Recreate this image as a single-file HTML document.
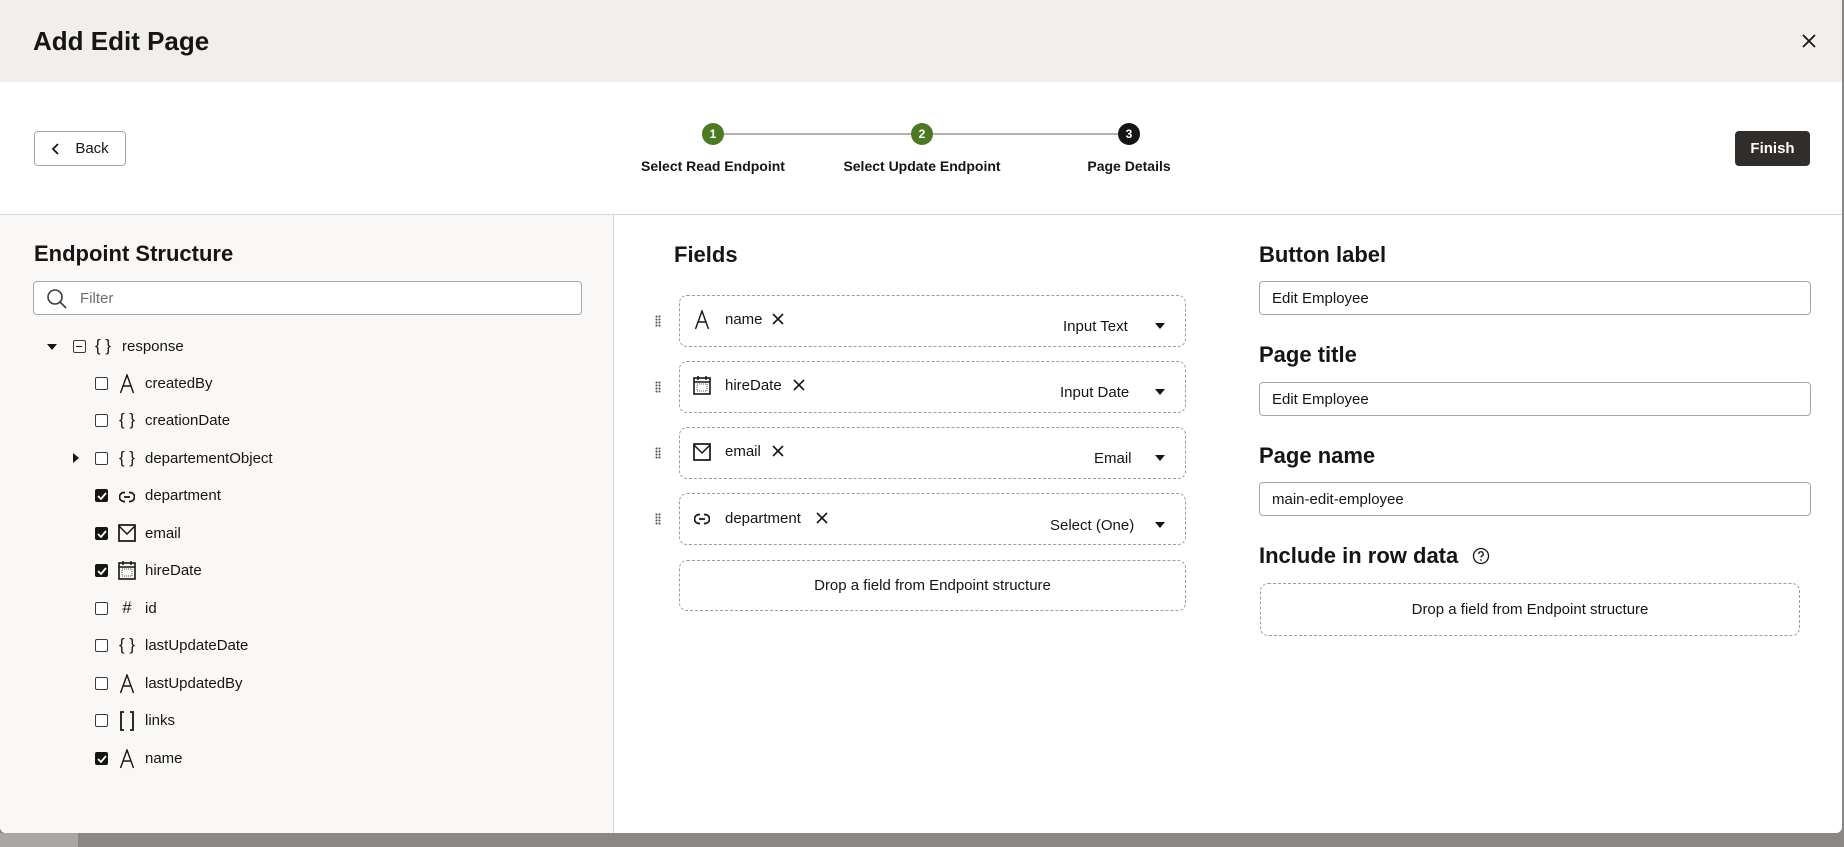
<!DOCTYPE html>
<html><head><meta charset="utf-8"><style>
*{box-sizing:border-box;margin:0;padding:0}
body{width:1844px;height:847px;overflow:hidden;background:#8a8886;font-family:"Liberation Sans",sans-serif;color:#161513;position:relative}
.dlg{position:absolute;left:0;top:0;width:1842px;height:833px;background:#fff;border-radius:0 0 6px 6px;overflow:hidden}
.hdr{position:absolute;left:0;top:0;width:100%;height:82px;background:#f0efed}
.hdr h1{position:absolute;left:33px;top:26px;font-size:26px;font-weight:bold;line-height:30px}
.abs{position:absolute}
.btn{position:absolute;border-radius:4px;font-size:15px;display:flex;align-items:center;justify-content:center}
.left{position:absolute;left:0;top:215px;width:614px;height:618px;background:#f9f8f7;border-right:1px solid #d6d4d2}
.sep{position:absolute;left:0;top:214px;width:100%;height:1px;background:#d6d4d2}
h2{position:absolute;font-size:22px;font-weight:bold;line-height:26px}
.inp{position:absolute;border:1px solid #a9a7a5;border-radius:4px;background:#fff;font-size:15px;display:flex;align-items:center;padding-left:12px}
.cb{position:absolute;width:13px;height:13px;border:1.5px solid #3d3b39;border-radius:2px;background:#fff}
.cb.on{background:#161513;border-color:#161513}
.ic{position:absolute;width:22px;text-align:center;font-size:17px}
.txt{position:absolute;font-size:15px;white-space:nowrap}
.card{position:absolute;left:679px;width:507px;height:52px;border:1px dashed #9e9c9a;border-radius:8px}
.drag{position:absolute;left:655px;width:6px;height:12px;background-image:radial-gradient(circle,#555 0.9px,transparent 1.2px);background-size:3px 3px}
.tri{position:absolute;width:0;height:0;border-left:5px solid transparent;border-right:5px solid transparent;border-top:6px solid #161513}
.step{position:absolute;width:22px;height:22px;border-radius:50%;color:#fff;font-size:12px;font-weight:bold;display:flex;align-items:center;justify-content:center}
.sl{position:absolute;top:158px;font-size:14px;font-weight:bold;white-space:nowrap;transform:translateX(-50%)}
</style></head><body>
<div class="abs" style="left:0;top:833px;width:78px;height:14px;background:#a9a7a5"></div>
<div class="dlg">
 <div class="hdr"><h1>Add Edit Page</h1>
  <svg class="abs" style="left:1802px;top:34px" width="14" height="14" viewBox="0 0 14 14"><path d="M1 1L13 13M13 1L1 13" stroke="#161513" stroke-width="1.8"/></svg>
 </div>
 <div class="btn" style="left:34px;top:131px;width:92px;height:35px;border:1px solid #a9a7a5;background:#fff">
  <svg width="10" height="12" viewBox="0 0 10 12" style="margin-right:14px"><path d="M7 1L2 6L7 11" stroke="#161513" stroke-width="1.8" fill="none"/></svg>Back</div>
 <div class="abs" style="left:724px;top:133px;width:406px;height:2px;background:#b3b1af"></div>
 <div class="step" style="left:702px;top:123px;background:#4b7a22">1</div>
 <div class="step" style="left:911px;top:123px;background:#4b7a22">2</div>
 <div class="step" style="left:1118px;top:123px;background:#161513">3</div>
 <div class="sl" style="left:713px">Select Read Endpoint</div>
 <div class="sl" style="left:922px">Select Update Endpoint</div>
 <div class="sl" style="left:1129px">Page Details</div>
 <div class="btn" style="left:1735px;top:131px;width:75px;height:35px;background:#312d2a;color:#fff;font-weight:bold">Finish</div>
 <div class="sep"></div>
 <div class="left">
  <h2 style="left:34px;top:26px">Endpoint Structure</h2>
  <div class="inp" style="left:33px;top:66px;width:549px;height:34px;padding-left:46px;color:#6f6d6b">Filter
   <svg class="abs" style="left:12px;top:6px" width="22" height="22" viewBox="0 0 22 22"><circle cx="9" cy="9" r="7" stroke="#3d3b39" stroke-width="1.6" fill="none"/><path d="M14 14L20 20" stroke="#3d3b39" stroke-width="1.6"/></svg></div>
 </div>
 <div class="tri" style="left:47px;top:344px"></div>
 <div class="abs" style="left:73px;top:340px;width:13px;height:13px;border:1.5px solid #3d3b39;border-radius:2px"><div style="position:absolute;left:2px;top:4.5px;width:6px;height:1.5px;background:#161513"></div></div>
 <div class="ic" style="left:92px;top:336px">{ }</div>
 <div class="txt" style="left:122px;top:338px">response</div>

 <div class="cb" style="left:95px;top:377px"></div>
 <svg class="abs" style="left:119px;top:374px" width="16" height="20" viewBox="0 0 16 20"><path d="M1.5 19L8 1L14.5 19M4 12H12" stroke="#161513" stroke-width="1.4" fill="none"/></svg>
 <div class="txt" style="left:145px;top:375px">createdBy</div>
 <div class="cb" style="left:95px;top:414px"></div><div class="ic" style="left:116px;top:410px">{ }</div><div class="txt" style="left:145px;top:412px">creationDate</div>
 <div class="abs" style="left:73px;top:453px;width:0;height:0;border-top:5px solid transparent;border-bottom:5px solid transparent;border-left:6px solid #161513"></div>
 <div class="cb" style="left:95px;top:452px"></div><div class="ic" style="left:116px;top:448px">{ }</div><div class="txt" style="left:145px;top:450px">departementObject</div>
 <div class="cb on" style="left:95px;top:489px"></div><svg class="abs" style="left:97px;top:492px" width="10" height="8" viewBox="0 0 10 8"><path d="M1 4L4 7L9 1" stroke="#fff" stroke-width="1.8" fill="none"/></svg>
 <svg class="abs" style="left:119px;top:490px" width="16" height="14" viewBox="0 0 16 14"><path d="M6 2.5H5a4.5 4.5 0 0 0 0 9h1M10 2.5h1a4.5 4.5 0 0 1 0 9h-1M5 7h6" stroke="#161513" stroke-width="1.7" fill="none"/></svg>
 <div class="txt" style="left:145px;top:487px">department</div>
 <div class="cb on" style="left:95px;top:527px"></div><svg class="abs" style="left:97px;top:530px" width="10" height="8" viewBox="0 0 10 8"><path d="M1 4L4 7L9 1" stroke="#fff" stroke-width="1.8" fill="none"/></svg>
 <svg class="abs" style="left:118px;top:524px" width="18" height="18" viewBox="0 0 18 18"><rect x="1" y="1" width="16" height="16" fill="none" stroke="#161513" stroke-width="1.7"/><path d="M1 2L9 10L17 2" stroke="#161513" stroke-width="1.5" fill="none"/></svg>
 <div class="txt" style="left:145px;top:525px">email</div>
 <div class="cb on" style="left:95px;top:564px"></div><svg class="abs" style="left:97px;top:567px" width="10" height="8" viewBox="0 0 10 8"><path d="M1 4L4 7L9 1" stroke="#fff" stroke-width="1.8" fill="none"/></svg>
 <svg class="abs" style="left:118px;top:560px" width="18" height="20" viewBox="0 0 18 20"><rect x="1" y="3" width="16" height="16" fill="none" stroke="#161513" stroke-width="1.6"/><path d="M5 1v4M13 1v4M1 7h16" stroke="#161513" stroke-width="1.5"/><rect x="4" y="9" width="10" height="7" fill="none" stroke="#555" stroke-width="1" stroke-dasharray="1 1"/></svg>
 <div class="txt" style="left:145px;top:562px">hireDate</div>
 <div class="cb" style="left:95px;top:602px"></div><div class="ic" style="left:116px;top:598px">#</div><div class="txt" style="left:145px;top:600px">id</div>
 <div class="cb" style="left:95px;top:639px"></div><div class="ic" style="left:116px;top:635px">{ }</div><div class="txt" style="left:145px;top:637px">lastUpdateDate</div>
 <div class="cb" style="left:95px;top:677px"></div>
 <svg class="abs" style="left:119px;top:674px" width="16" height="20" viewBox="0 0 16 20"><path d="M1.5 19L8 1L14.5 19M4 12H12" stroke="#161513" stroke-width="1.4" fill="none"/></svg>
 <div class="txt" style="left:145px;top:675px">lastUpdatedBy</div>
 <div class="cb" style="left:95px;top:714px"></div>
 <svg class="abs" style="left:119px;top:711px" width="16" height="20" viewBox="0 0 16 20"><path d="M5 1H2V19H5M11 1H14V19H11" stroke="#161513" stroke-width="1.8" fill="none"/></svg>
 <div class="txt" style="left:145px;top:712px">links</div>
 <div class="cb on" style="left:95px;top:752px"></div><svg class="abs" style="left:97px;top:755px" width="10" height="8" viewBox="0 0 10 8"><path d="M1 4L4 7L9 1" stroke="#fff" stroke-width="1.8" fill="none"/></svg>
 <svg class="abs" style="left:119px;top:749px" width="16" height="20" viewBox="0 0 16 20"><path d="M1.5 19L8 1L14.5 19M4 12H12" stroke="#161513" stroke-width="1.4" fill="none"/></svg>
 <div class="txt" style="left:145px;top:750px">name</div>

 <!-- fields -->
 <h2 style="left:674px;top:242px">Fields</h2>
 <div class="card" style="top:295px"></div><div class="drag" style="top:315px"></div>
 <svg class="abs" style="left:694px;top:310px" width="16" height="20" viewBox="0 0 16 20"><path d="M1.5 19L8 1L14.5 19M4 12H12" stroke="#161513" stroke-width="1.4" fill="none"/></svg>
 <div class="txt" style="left:725px;top:311px">name</div>
 <svg class="abs" style="left:772px;top:313px" width="12" height="12" viewBox="0 0 12 12"><path d="M1 1L11 11M11 1L1 11" stroke="#161513" stroke-width="1.6"/></svg>
 <div class="txt" style="left:1063px;top:318px">Input Text</div><div class="tri" style="left:1155px;top:323px"></div>

 <div class="card" style="top:361px"></div><div class="drag" style="top:381px"></div>
 <svg class="abs" style="left:693px;top:375px" width="18" height="20" viewBox="0 0 18 20"><rect x="1" y="3" width="16" height="16" fill="none" stroke="#161513" stroke-width="1.6"/><path d="M5 1v4M13 1v4M1 7h16" stroke="#161513" stroke-width="1.5"/><rect x="4" y="9" width="10" height="7" fill="none" stroke="#555" stroke-width="1" stroke-dasharray="1 1"/></svg>
 <div class="txt" style="left:725px;top:377px">hireDate</div>
 <svg class="abs" style="left:793px;top:379px" width="12" height="12" viewBox="0 0 12 12"><path d="M1 1L11 11M11 1L1 11" stroke="#161513" stroke-width="1.6"/></svg>
 <div class="txt" style="left:1060px;top:384px">Input Date</div><div class="tri" style="left:1155px;top:389px"></div>

 <div class="card" style="top:427px"></div><div class="drag" style="top:447px"></div>
 <svg class="abs" style="left:693px;top:443px" width="18" height="18" viewBox="0 0 18 18"><rect x="1" y="1" width="16" height="16" fill="none" stroke="#161513" stroke-width="1.7"/><path d="M1 2L9 10L17 2" stroke="#161513" stroke-width="1.5" fill="none"/></svg>
 <div class="txt" style="left:725px;top:443px">email</div>
 <svg class="abs" style="left:772px;top:445px" width="12" height="12" viewBox="0 0 12 12"><path d="M1 1L11 11M11 1L1 11" stroke="#161513" stroke-width="1.6"/></svg>
 <div class="txt" style="left:1094px;top:450px">Email</div><div class="tri" style="left:1155px;top:455px"></div>

 <div class="card" style="top:493px"></div><div class="drag" style="top:513px"></div>
 <svg class="abs" style="left:694px;top:512px" width="16" height="14" viewBox="0 0 16 14"><path d="M6 2.5H5a4.5 4.5 0 0 0 0 9h1M10 2.5h1a4.5 4.5 0 0 1 0 9h-1M5 7h6" stroke="#161513" stroke-width="1.7" fill="none"/></svg>
 <div class="txt" style="left:725px;top:510px">department</div>
 <svg class="abs" style="left:816px;top:512px" width="12" height="12" viewBox="0 0 12 12"><path d="M1 1L11 11M11 1L1 11" stroke="#161513" stroke-width="1.6"/></svg>
 <div class="txt" style="left:1050px;top:517px">Select (One)</div><div class="tri" style="left:1155px;top:522px"></div>

 <div class="card" style="top:560px;height:51px;display:flex;align-items:center;justify-content:center;font-size:15px">Drop a field from Endpoint structure</div>

 <!-- right -->
 <h2 style="left:1259px;top:242px">Button label</h2>
 <div class="inp" style="left:1259px;top:281px;width:552px;height:34px">Edit Employee</div>
 <h2 style="left:1259px;top:342px">Page title</h2>
 <div class="inp" style="left:1259px;top:382px;width:552px;height:34px">Edit Employee</div>
 <h2 style="left:1259px;top:443px">Page name</h2>
 <div class="inp" style="left:1259px;top:482px;width:552px;height:34px">main-edit-employee</div>
 <h2 style="left:1259px;top:543px">Include in row data</h2>
 <svg class="abs" style="left:1472px;top:547px" width="18" height="18" viewBox="0 0 18 18"><circle cx="9" cy="9" r="7.5" stroke="#161513" stroke-width="1.3" fill="none"/><path d="M6.8 7a2.2 2.2 0 1 1 3 2c-.7.3-.8.8-.8 1.5" stroke="#161513" stroke-width="1.3" fill="none"/><circle cx="9" cy="13" r=".9" fill="#161513"/></svg>
 <div class="card" style="left:1260px;top:583px;width:540px;height:53px;display:flex;align-items:center;justify-content:center;font-size:15px">Drop a field from Endpoint structure</div>
</div>
</body></html>
